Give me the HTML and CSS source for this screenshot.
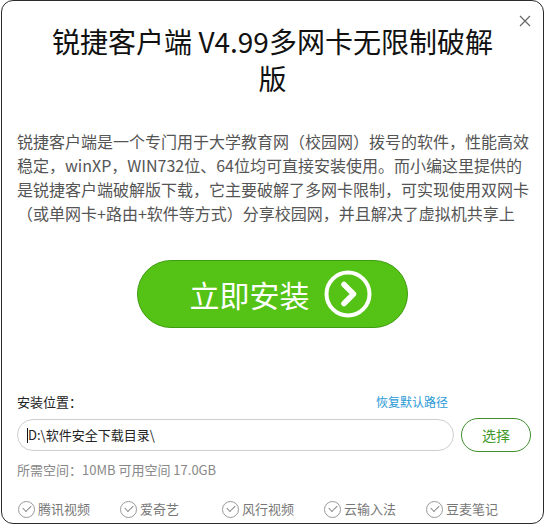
FILE: index.html
```html
<!DOCTYPE HTML>
<html>
<head>
<meta http-equiv="Content-Type" content="text/html; charset=utf-8">
<title>锐捷客户端 安装</title>
<link rel="stylesheet" href="styles.css">
</head>
<body>
<div class="win">
	<a class="close" href="#"><svg width="12" height="12" viewBox="0 0 12 12"><path d="M1 1L11 11M11 1L1 11" stroke="#666" stroke-width="1.2" fill="none"/></svg></a>
	<h1 class="title">锐捷客户端 V4.99多网卡无限制破解版</h1>
	<p class="desc">锐捷客户端是一个专门用于大学教育网（校园网）拨号的软件，性能高效稳定，winXP，WIN732位、64位均可直接安装使用。而小编这里提供的是锐捷客户端破解版下载，它主要破解了多网卡限制，可实现使用双网卡（或单网卡+路由+软件等方式）分享校园网，并且解决了虚拟机共享上</p>
	<div class="act">
		<a class="install" href="#">
			<span>立即安装</span>
			<svg width="48" height="48" viewBox="0 0 48 48"><circle cx="24" cy="24" r="21.5" stroke="#fff" stroke-width="4" fill="none"/><polyline points="20,14.5 29.5,24 20,33.5" stroke="#fff" stroke-width="5.5" stroke-linecap="round" stroke-linejoin="round" fill="none"/></svg>
		</a>
	</div>
	<div class="loc">
		<span class="lbl">安装位置：</span>
		<a class="reset" href="#">恢复默认路径</a>
	</div>
	<div class="pathrow">
		<div class="path">D:\软件安全下载目录\</div>
		<a class="pick" href="#">选择</a>
	</div>
	<div class="space">所需空间：10MB 可用空间 17.0GB</div>
	<ul class="opts">
		<li><i></i>腾讯视频</li>
		<li><i></i>爱奇艺</li>
		<li><i></i>风行视频</li>
		<li><i></i>云输入法</li>
		<li><i></i>豆麦笔记</li>
	</ul>
</div>
</body>
</html>
```
FILE: styles.css
```css
html,body{ margin:0;padding:0; background:#fff;}
body{ font-family:"Noto Sans CJK SC","Noto Sans",sans-serif; color:#333;}
ul{ margin:0;padding:0;}
li{ list-style:none;}
a{ text-decoration:none;}

.win{ width:541px;height:522px; margin-left:1px; border:1px solid #2b2b2b; border-radius:12px; position:relative; overflow:hidden;}
.close{ position:absolute; right:12px; top:14px; width:12px;height:12px; display:block;}
.close svg{ display:block;}

.title{ margin:0; padding:22px 50px 0; font-size:28px; line-height:37px; font-weight:normal; text-align:center; color:#111;}
.desc{ margin:32px 0 0 15px; width:513px; height:96px; font-size:16px; line-height:24px; color:#555;}

.act{ display:flex; justify-content:center; margin-top:35px;}
.install{ width:271px;height:68px; box-sizing:border-box; border:1px solid #3f9c12; border-radius:34px; background:#55c316; display:flex; align-items:center; justify-content:center; gap:14px; padding-left:16px; color:#fff; font-size:30px;}
.install svg{ display:block;}

.loc{ display:flex; justify-content:space-between; align-items:center; margin:64px 0 0 15px; width:431px; font-size:13px; line-height:20px;}
.loc .lbl{ color:#222;}
.loc .reset{ color:#2b9ad6; font-size:12px;}

.pathrow{ display:flex; align-items:center; gap:7px; margin:6px 0 0 15px;}
.path{ width:437px;height:32px; box-sizing:border-box; border:1px solid #cfcfcf; border-radius:16px; padding-left:10px; font-size:13px; line-height:30px; color:#222; position:relative;}
.path:before{ content:""; position:absolute; left:9px; top:8px; width:1px; height:15px; background:#111;}
.pick{ width:70px;height:34px; box-sizing:border-box; border:1px solid #3f8f2c; border-radius:17px; display:flex; align-items:center; justify-content:center; font-size:14px; color:#3f9a2a;}

.space{ margin:8px 0 0 15px; font-size:13px; line-height:20px; color:#888;}

.opts{ display:flex; margin:19px 0 0 16px;}
.opts li{ width:102px; display:flex; align-items:center; gap:3px; font-size:13px; line-height:20px; color:#777;}
.opts i{ width:15px;height:15px; border:1px solid #999; border-radius:50%; position:relative;}
.opts i:after{ content:""; position:absolute; left:4px; top:3px; width:7px; height:4px; border-left:1px solid #888; border-bottom:1px solid #888; transform:rotate(-45deg);}
```
